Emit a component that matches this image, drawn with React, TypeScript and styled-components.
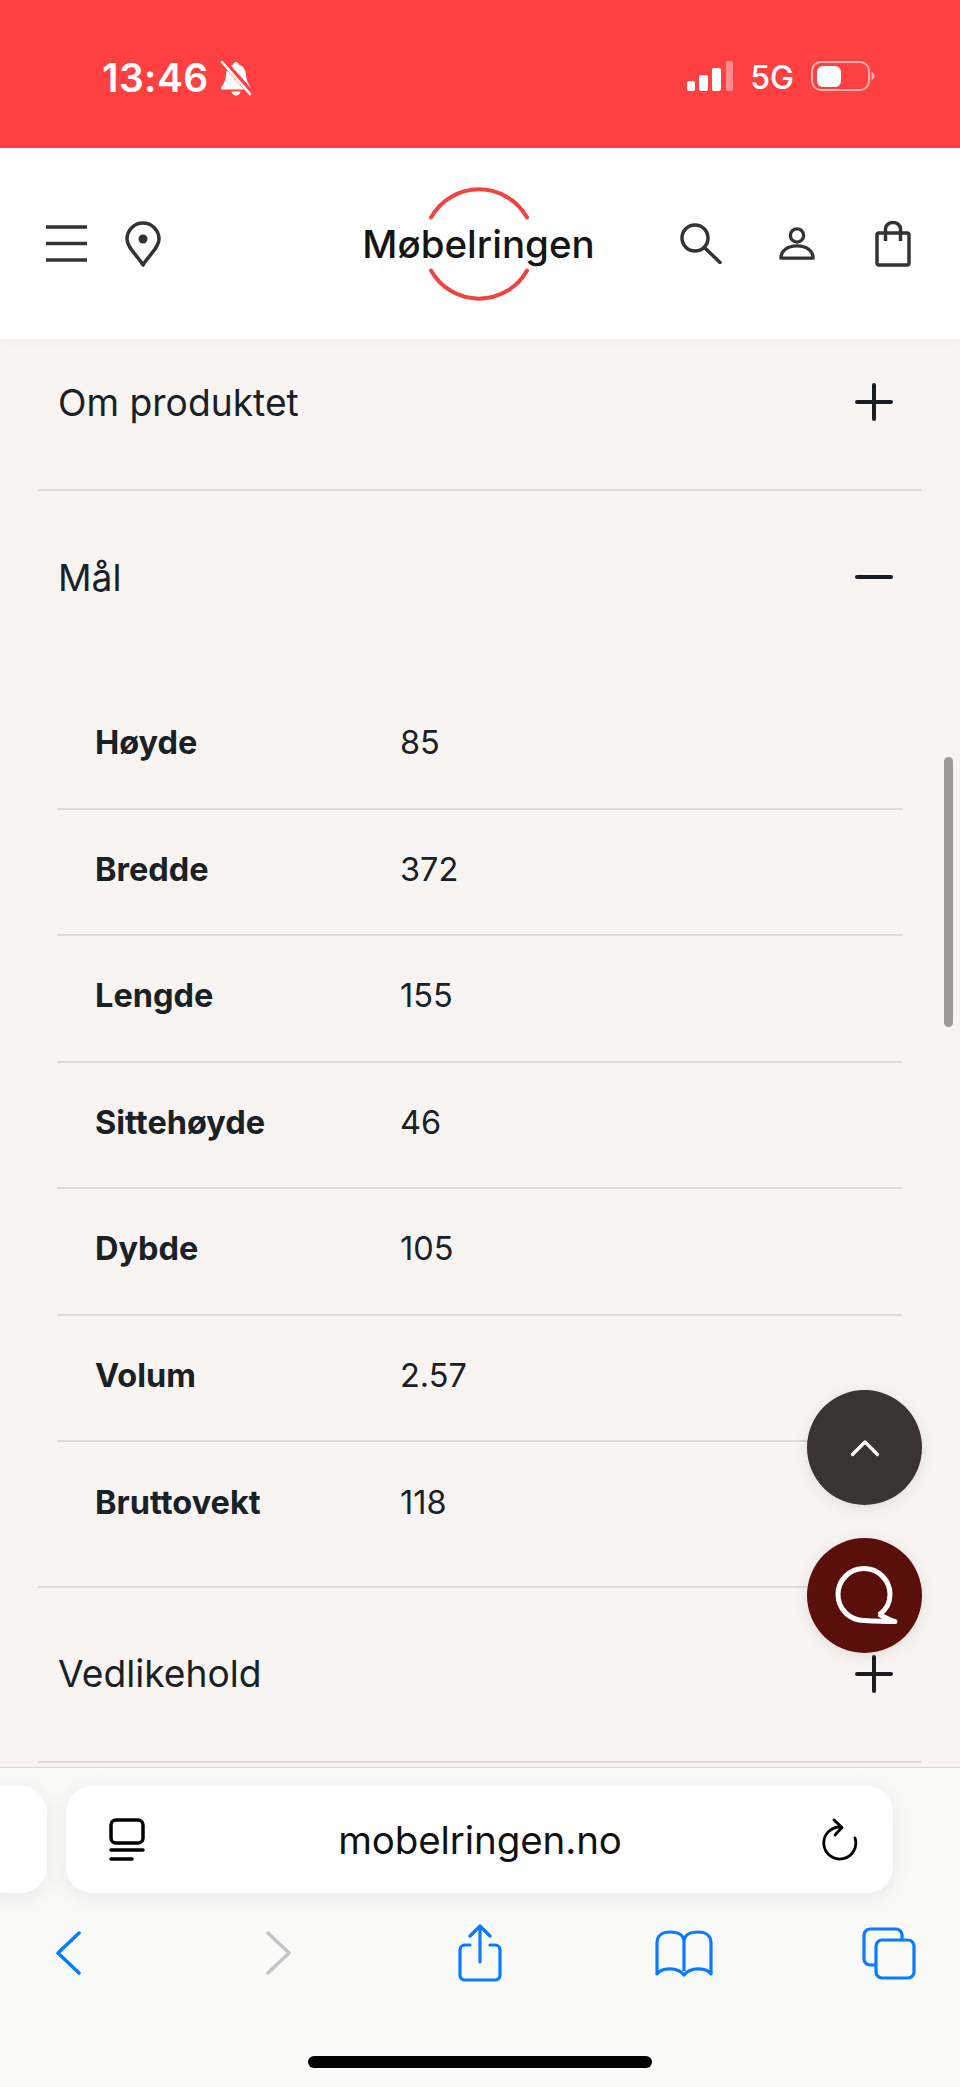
import styled, { createGlobalStyle } from 'styled-components'

const Global = createGlobalStyle`
  html, body {
    margin: 0;
    padding: 0;
    background: #f7f4f1;
  }
  * {
    box-sizing: border-box;
  }
`

const Page = styled.div`
  position: relative;
  width: 960px;
  height: 2087px;
  display: flex;
  flex-direction: column;
  overflow: hidden;
  font-family: Inter, "Liberation Sans", sans-serif;
  color: #1a2126;
`

const StatusBar = styled.div`
  height: 148px;
  flex: none;
  background: #ff4040;
  color: #fff;
  display: flex;
  justify-content: space-between;
  padding: 61px 85px 0 102px;
`

const StatusGroup = styled.div`
  display: flex;
  align-items: flex-start;
`

const Time = styled.span`
  font-size: 39px;
  line-height: 34px;
  font-weight: 600;
  margin-right: 11px;
  letter-spacing: 0.4px;
`

const Network = styled.span`
  font-size: 32px;
  line-height: 34px;
  font-weight: 500;
  margin: 0 17px 0 17px;
`

const Header = styled.header`
  position: relative;
  z-index: 1;
  height: 191px;
  flex: none;
  background: #fff;
  display: grid;
  grid-template-columns: 1fr auto 1fr;
  align-items: center;
  padding: 0 49px 0 46px;
  box-shadow: 0 2px 10px rgb(0 0 0 / 4%);
`

const IconRow = styled.div<{ $gap: number; $end?: boolean }>`
  display: flex;
  align-items: center;
  gap: ${(p) => p.$gap}px;
  justify-content: ${(p) => (p.$end ? 'flex-end' : 'flex-start')};
`

const Logo = styled.div`
  position: relative;
  width: 226px;
  height: 112px;
  display: flex;
  align-items: center;
  justify-content: center;
  padding-top: 1px;
  font-weight: 500;
  font-size: 38.5px;
  color: #151515;
  white-space: nowrap;
  svg {
    position: absolute;
    left: 0;
    top: 0;
    overflow: visible;
  }
`

const Content = styled.main`
  flex: 1;
  min-height: 0;
  overflow: hidden;
  background: #f7f4f1;
`

const Accordion = styled.div`
  margin: -23px 39px 0 38px;
`

const Section = styled.section`
  border-bottom: 2px solid #dddad7;
`

const SectionHead = styled.div`
  height: 173px;
  display: flex;
  align-items: center;
  justify-content: space-between;
  padding: 0 28px 1px 20px;
  font-size: 37.2px;
`

const SpecTable = styled.div`
  margin: 19px 19px 17.400px 19px;
`

const SpecRow = styled.div`
  height: 126.500px;
  display: grid;
  grid-template-columns: 305px 1fr;
  align-items: center;
  padding: 0 0 5px 38px;
  font-size: 32.5px;
  border-bottom: 2px solid #dddad7;
  &:last-child {
    border-bottom: none;
  }
`

const SpecName = styled.span`
  font-weight: 700;
`

const SpecValue = styled.span`
  font-weight: 400;
`

const ScrollThumb = styled.div`
  position: absolute;
  left: 944px;
  top: 757px;
  width: 9px;
  height: 270px;
  border-radius: 5px;
  background: #9b9a99;
`

const FloatButton = styled.button<{ $top: number; $bg: string }>`
  position: absolute;
  z-index: 2;
  left: 807px;
  top: ${(p) => p.$top}px;
  width: 115px;
  height: 115px;
  padding: 0;
  border: none;
  border-radius: 50%;
  background: ${(p) => p.$bg};
  display: flex;
  align-items: center;
  justify-content: center;
  box-shadow: 0 3px 14px rgb(0 0 0 / 10%);
`

const Toolbar = styled.div`
  position: relative;
  z-index: 3;
  height: 320px;
  flex: none;
  background: #fafaf9;
  border-top: 1px solid #d6d6d5;
  overflow: hidden;
`

const UrlRow = styled.div`
  display: flex;
  gap: 19px;
  margin: 18px 67px 0 -20px;
  height: 107px;
`

const PeekCard = styled.div`
  width: 67px;
  flex: none;
  background: #fff;
  border-radius: 26px;
  box-shadow: 0 4px 24px rgb(0 0 0 / 8%);
`

const UrlBar = styled.div`
  flex: 1;
  background: #fff;
  border-radius: 26px;
  box-shadow: 0 4px 24px rgb(0 0 0 / 8%);
  display: flex;
  align-items: center;
  justify-content: space-between;
  padding: 0 35px 0 43px;
`

const UrlText = styled.span`
  font-size: 38.5px;
  letter-spacing: -0.1px;
  color: #111;
  margin-right: 7px;
`

const NavRow = styled.div`
  display: grid;
  grid-template-columns: repeat(5, 205px);
  justify-items: center;
  align-items: center;
  height: 60px;
  margin: 30px 0 0 -34px;
  svg:nth-child(2) {
    margin-left: 9px;
  }
  svg:nth-child(3) {
    margin-left: 3px;
  }
`

const HomeIndicator = styled.div`
  width: 344px;
  height: 12px;
  border-radius: 6px;
  background: #000;
  margin: 73px auto 0;
`

const specs = [
  ['Høyde', '85'],
  ['Bredde', '372'],
  ['Lengde', '155'],
  ['Sittehøyde', '46'],
  ['Dybde', '105'],
  ['Volum', '2.57'],
  ['Bruttovekt', '118'],
]

const Plus = () => (
  <svg width="38" height="38" viewBox="0 0 38 38" stroke="#171d22" strokeWidth="4" strokeLinecap="round">
    <path d="M2 19H36M19 2V36" />
  </svg>
)

const Minus = () => (
  <svg width="38" height="38" viewBox="0 0 38 38" stroke="#171d22" strokeWidth="4" strokeLinecap="round">
    <path d="M2 19H36" />
  </svg>
)

const blue = '#0a7aff'

export default function App() {
  return (
    <Page>
      <Global />
      <StatusBar>
        <StatusGroup>
          <Time>13:46</Time>
          <svg width="33" height="35" viewBox="0 0 33 35" fill="#fff">
            <path d="M16 1c-1.6 0-2.6 1-2.8 2.6C8.6 5 6.4 9 6 14c-.4 5-2 9-4.5 12-.8 1-.2 2.5 1.2 2.5h26.6c1.4 0 2-1.5 1.2-2.5-2.5-3-4-7-4.500-12-.4-5-2.600-9-7.200-10.400C18.600 2 17.600 1 16 1z" />
            <path d="M11.500 30.500h9c-.5 2.500-2.300 4-4.500 4s-4-1.500-4.500-4z" />
            <path d="M3 0L32 33" stroke="#ff4040" strokeWidth="6" />
            <path d="M2 1L30 33" stroke="#fff" strokeWidth="2.600" strokeLinecap="round" />
          </svg>
        </StatusGroup>
        <StatusGroup>
          <svg width="46" height="31" viewBox="0 0 46 31" fill="#fff">
            <rect x="0" y="20" width="8" height="10" rx="2" />
            <rect x="12" y="14" width="9" height="16" rx="2" />
            <rect x="25" y="7" width="9" height="23" rx="2" />
            <rect x="39" y="0" width="7" height="30" rx="2" opacity="0.4" />
          </svg>
          <Network>5G</Network>
          <svg width="64" height="31" viewBox="0 0 64 31">
            <rect x="1" y="1" width="57" height="28" rx="9" fill="none" stroke="#fff" strokeOpacity="0.6" strokeWidth="2" />
            <rect x="6" y="5" width="24" height="21" rx="6" fill="#fff" />
            <path d="M60.500 11c2 .8 3 2.200 3 4s-1 3.200-3 4z" fill="#fff" opacity="0.6" />
          </svg>
        </StatusGroup>
      </StatusBar>

      <Header>
        <IconRow $gap={38}>
          <svg width="41" height="37" viewBox="0 0 41 37" stroke="#333" strokeWidth="3.500">
            <path d="M0 2H41M0 18.500H41M0 35H41" />
          </svg>
          <svg width="36" height="46" viewBox="0 0 36 46" fill="none" stroke="#333" strokeWidth="3.500" strokeLinejoin="round">
            <path d="M18 44C12 34 2 27 2 18a16 16 0 0 1 32 0c0 9-10 16-16 26z" />
            <circle cx="18" cy="18" r="4.500" fill="#333" stroke="none" />
          </svg>
        </IconRow>
        <Logo>
          Møbelringen
          <svg width="226" height="112" viewBox="0 0 226 112" fill="none" stroke="#ef4444" strokeWidth="4" strokeLinecap="round">
            <path d="M65 29.500A55 55 0 0 1 161 29.500" />
            <path d="M65 82.500A55 55 0 0 0 161 82.500" />
          </svg>
        </Logo>
        <IconRow $gap={57} $end>
          <svg width="42" height="41" viewBox="0 0 42 41" fill="none" stroke="#333" strokeWidth="3.500" strokeLinecap="round">
            <circle cx="15" cy="15" r="13" />
            <path d="M25 25L40 39.500" />
          </svg>
          <svg width="36" height="36" viewBox="0 0 38 36" fill="none" stroke="#333" strokeWidth="3.500" strokeLinejoin="round">
            <circle cx="19" cy="9" r="7" />
            <path d="M2 33c0-8 7-13 17-13s17 5 17 13z" />
          </svg>
          <svg width="39" height="46" viewBox="-3 0 39 46" fill="none" stroke="#333" strokeWidth="3.500">
            <rect x="2" y="12" width="32" height="32" rx="2" />
            <path d="M10.500 20V8a7.500 6.500 0 0 1 15 0V20" />
          </svg>
        </IconRow>
      </Header>

      <Content>
        <Accordion>
          <Section>
            <SectionHead>
              Om produktet
              <Plus />
            </SectionHead>
          </Section>
          <Section>
            <SectionHead>
              Mål
              <Minus />
            </SectionHead>
            <SpecTable>
              {specs.map(([name, value]) => (
                <SpecRow key={name}>
                  <SpecName>{name}</SpecName>
                  <SpecValue>{value}</SpecValue>
                </SpecRow>
              ))}
            </SpecTable>
          </Section>
          <Section>
            <SectionHead>
              Vedlikehold
              <Plus />
            </SectionHead>
          </Section>
        </Accordion>
      </Content>

      <ScrollThumb />

      <FloatButton $top={1390} $bg="#3a3331" aria-label="Til toppen">
        <svg width="30" height="18" viewBox="0 0 30 18" fill="none" stroke="#fff" strokeWidth="3.200" strokeLinecap="round" strokeLinejoin="round">
          <path d="M2.500 15.500L15 3L27.500 15.500" />
        </svg>
      </FloatButton>
      <FloatButton $top={1538} $bg="#5a0f0b" aria-label="Chat">
        <svg width="115" height="115" viewBox="0 0 115 115" fill="none" stroke="#fff" strokeWidth="5" strokeLinejoin="round">
          <path d="M72 77C79 72 83 65 83 56.500A26 26 0 1 0 57 82.500C66 83 78 83.500 88 83.500C82 81.500 76 79 72 76" />
        </svg>
      </FloatButton>

      <Toolbar>
        <UrlRow>
          <PeekCard />
          <UrlBar>
            <svg width="36" height="43" viewBox="0 0 36 43" fill="none" stroke="#000" strokeWidth="3.500" strokeLinecap="round">
              <rect x="2" y="2" width="32" height="23" rx="5" />
              <path d="M2 32H34M2 41H23" />
            </svg>
            <UrlText>mobelringen.no</UrlText>
            <svg width="36" height="43" viewBox="0 0 36 43" fill="none" stroke="#000" strokeWidth="2.800" strokeLinecap="round" strokeLinejoin="round">
              <path d="M18 9A16 16 0 1 0 33 20" />
              <path d="M12 2L20 9.500L13 17" />
            </svg>
          </UrlBar>
        </UrlRow>
        <NavRow>
          <svg width="25" height="44" viewBox="0 0 25 44" fill="none" stroke={blue} strokeWidth="3.500" strokeLinecap="round" strokeLinejoin="round">
            <path d="M23 2L2 22L23 42" />
          </svg>
          <svg width="25" height="44" viewBox="0 0 25 44" fill="none" stroke="#c4c4c4" strokeWidth="3.500" strokeLinecap="round" strokeLinejoin="round">
            <path d="M2 2L23 22L2 42" />
          </svg>
          <svg width="44" height="58" viewBox="0 0 44 58" fill="none" stroke={blue} strokeWidth="3.200" strokeLinecap="round" strokeLinejoin="round">
            <path d="M12 21H7a5 5 0 0 0-5 5V51a5 5 0 0 0 5 5H37a5 5 0 0 0 5-5V26a5 5 0 0 0-5-5H32" />
            <path d="M22 38V2M12 12L22 2L32 12" />
          </svg>
          <svg width="58" height="47" viewBox="0 0 58 47" fill="none" stroke={blue} strokeWidth="3.200" strokeLinejoin="round">
            <path d="M29 12C29 5 23 2 15 2C7 2 2 6 2 13V44C6 38 22 36 29 45C36 36 52 38 56 44V13C56 6 51 2 43 2C35 2 29 5 29 12V41" />
          </svg>
          <svg width="54" height="53" viewBox="0 0 54 53" fill="none" stroke={blue} strokeWidth="3.200">
            <path d="M13 38H8a6 6 0 0 1-6-6V8a6 6 0 0 1 6-6H34a6 6 0 0 1 6 6V13" />
            <rect x="14" y="13" width="38" height="38" rx="6" />
          </svg>
        </NavRow>
        <HomeIndicator />
      </Toolbar>
    </Page>
  )
}
